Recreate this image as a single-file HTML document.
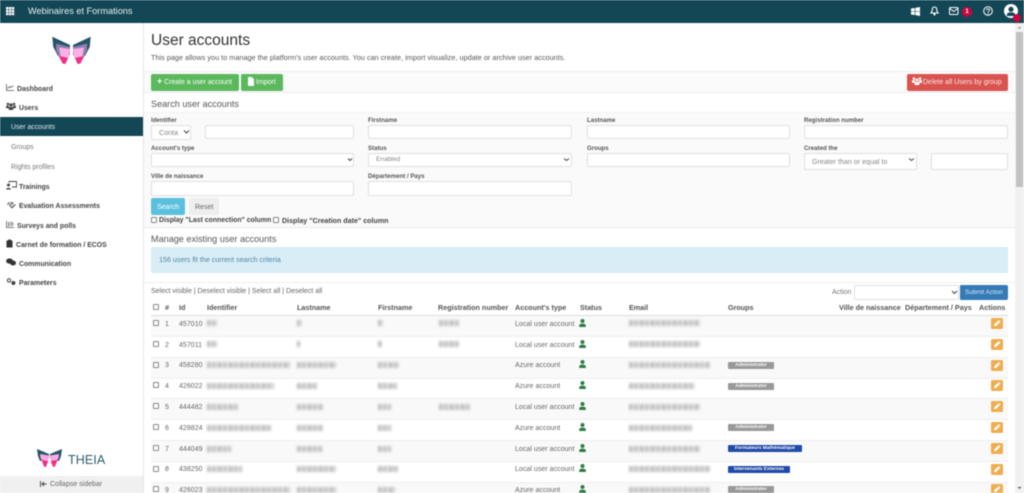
<!DOCTYPE html>
<html><head><meta charset="utf-8"><title>User accounts</title>
<style>
html,body{margin:0;padding:0;width:1024px;height:493px;overflow:hidden;background:#fff}
#r{position:absolute;left:0;top:0;width:1024px;height:493px;overflow:hidden;filter:blur(.4px);font-family:"Liberation Sans",sans-serif;color:#555;font-size:7.2px}
.t{position:absolute;white-space:nowrap;line-height:12px;margin-top:1px}
.a{position:absolute}
.B{font-weight:bold}
.l{font-weight:bold;font-size:6.1px;color:#555}
.t.n{font-weight:bold;font-size:6.9px;color:#444;margin-top:2px}
.h{font-weight:bold;font-size:7.2px;color:#555}
.t.c{font-size:7px;color:#666;letter-spacing:.04px;margin-top:1.7px}
.i{position:absolute;box-sizing:border-box;background:#fff;border:1px solid #e0e0e0;border-radius:2px}
.cb{position:absolute;box-sizing:border-box;width:6px;height:6px;border:1px solid #888;border-radius:1px;background:#fff}
.b{position:absolute;background:#cfcfcf;height:6px;filter:blur(1.2px);background-image:repeating-linear-gradient(90deg,#bdbdbd 0 3px,#dcdcdc 3px 5px,#c8c8c8 5px 9px,#e2e2e2 9px 11px)}
.g{position:absolute;left:728px;width:46px;height:7px;background:#999;border-radius:1px;color:#fff;font-size:4.8px;font-weight:bold;line-height:7px;text-align:center;white-space:nowrap}
.p{position:absolute;left:991px;width:12px;height:11px;background:#f0ad4e;border-radius:1.5px}
svg{position:absolute;overflow:visible}
</style></head><body><div id="r">

<!-- top bar -->
<div class="a" style="left:0;top:0;width:1024px;height:23px;background:#134756"></div>
<svg style="left:6px;top:7px" width="8" height="8"><g fill="#fff"><rect x="0" y="0" width="2.4" height="2.4"/><rect x="2.9" y="0" width="2.4" height="2.4"/><rect x="5.8" y="0" width="2.4" height="2.4"/><rect x="0" y="2.9" width="2.4" height="2.4"/><rect x="2.9" y="2.9" width="2.4" height="2.4"/><rect x="5.8" y="2.9" width="2.4" height="2.4"/><rect x="0" y="5.8" width="2.4" height="2.4"/><rect x="2.9" y="5.8" width="2.4" height="2.4"/><rect x="5.8" y="5.8" width="2.4" height="2.4"/></g></svg>
<div class="t" style="left:28px;top:4px;color:#e8eef0;font-size:9.2px">Webinaires et Formations</div>
<svg style="left:911px;top:7px" width="9" height="9"><path d="M0 1.5L3.8 1V4.2H0zM4.4 .9L9 0V4.2H4.4zM0 4.8H3.8V8L0 7.5zM4.4 4.8H9V9L4.4 8.1z" fill="#fff"/></svg>
<svg style="left:930px;top:6px" width="9" height="10"><path d="M4.5 1C2.8 1 2.2 2.4 2.2 4C2.2 5.6 1.6 6.4 1 7H8C7.4 6.4 6.8 5.6 6.8 4C6.8 2.4 6.2 1 4.5 1Z" fill="none" stroke="#fff" stroke-width="1.1"/><circle cx="4.5" cy="8.4" r="1.1" fill="#fff"/></svg>
<svg style="left:949px;top:7px" width="10" height="8"><rect x=".5" y=".5" width="8.5" height="7" rx="1" fill="none" stroke="#fff"/><path d="M.8 1.5L4.7 4.5L8.7 1.5" fill="none" stroke="#fff"/></svg>
<div class="a" style="left:962px;top:7px;width:10px;height:10px;border-radius:5px;background:#c8063c;color:#fff;font-size:6px;font-weight:bold;line-height:10px;text-align:center">1</div>
<svg style="left:983px;top:6px" width="10" height="10"><circle cx="5" cy="5" r="4.3" fill="none" stroke="#fff" stroke-width="1"/><path d="M3.5 4C3.5 2.4 6.5 2.4 6.5 4C6.5 5 5 5 5 6.2" fill="none" stroke="#fff" stroke-width=".9"/><circle cx="5" cy="7.6" r=".6" fill="#fff"/></svg>
<svg style="left:1004px;top:4px" width="15" height="15"><circle cx="7" cy="7" r="7" fill="#fff"/><circle cx="7" cy="5.3" r="2.6" fill="#134756"/><path d="M2.8 12V11C2.8 9 4.8 8.4 7 8.4C9.2 8.4 11.2 9 11.2 11V12Z" fill="#134756"/></svg>
<div class="a" style="left:1013px;top:14px;width:8px;height:8px;border-radius:4px;background:#c8063c"></div>

<!-- sidebar -->
<div class="a" style="left:143px;top:23px;width:1px;height:470px;background:#e6e6e6"></div>
<svg style="left:50px;top:35px" width="44" height="32">
 <g>
  <polygon points="2.3,1.7 20,10 20,15 8,21 3.3,12" fill="#245468"/>
  <polygon points="6,8.500 20,12 20,20 10,24 6,15" fill="#8f80ac"/>
  <polygon points="9,12.500 20,14 18.500,24 11,24" fill="#fdaee5"/>
  <polygon points="9,21 18,23 15.500,29 12.500,28.500" fill="#ee2f86"/>
 </g>
 <g transform="translate(43,0) scale(-1,1)">
  <polygon points="2.3,1.7 20,10 20,15 8,21 3.3,12" fill="#245468"/>
  <polygon points="6,8.500 20,12 20,20 10,24 6,15" fill="#8f80ac"/>
  <polygon points="9,12.500 20,14 18.500,24 11,24" fill="#fdaee5"/>
  <polygon points="9,21 18,23 15.500,29 12.500,28.500" fill="#ee2f86"/>
 </g>
</svg>

<svg style="left:6px;top:84px" width="8" height="7"><path d="M.5 0V6.5H8M1.5 4.5L3.5 2.5L5 3.5L7.5 1.5" fill="none" stroke="#555" stroke-width=".8"/></svg>
<div class="t n" style="left:17px;top:82px">Dashboard</div>
<svg style="left:6px;top:102px" width="10" height="8"><g fill="#444"><circle cx="2" cy="2" r="1.3"/><circle cx="8" cy="2" r="1.3"/><circle cx="5" cy="3" r="1.6"/><rect x="0" y="3.6" width="3" height="2.6" rx="1"/><rect x="7" y="3.6" width="3" height="2.6" rx="1"/><rect x="2.6" y="5" width="4.8" height="3" rx="1"/></g></svg>
<div class="t n" style="left:19px;top:101px">Users</div>
<div class="a" style="left:0;top:117px;width:143px;height:19px;background:#134756"></div>
<div class="t" style="left:11px;top:121px;color:#e2e8ea;font-size:6.9px">User accounts</div>
<div class="t" style="left:11px;top:141px;color:#777;font-size:6.9px">Groups</div>
<div class="t" style="left:11px;top:161px;color:#777;font-size:6.9px">Rights profiles</div>
<svg style="left:6px;top:181px" width="11" height="9"><circle cx="2.5" cy="4" r="1.5" fill="#444"/><path d="M0 8.5C0 6.3 5 6.3 5 8.5Z" fill="#444"/><path d="M3 1.5V.5H10.5V6H6" fill="none" stroke="#444" stroke-width=".9"/></svg>
<div class="t n" style="left:19px;top:180px">Trainings</div>
<div class="t" style="left:7px;top:197px;font-size:4.6px;font-weight:bold;color:#444">AB</div>
<svg style="left:9px;top:204px" width="7" height="5"><path d="M.5 1L3 3.8L6.5 .5" fill="none" stroke="#444"/></svg>
<div class="t n" style="left:19px;top:199px">Evaluation Assessments</div>
<svg style="left:6px;top:221px" width="8" height="7"><path d="M.5 0V6.5H8" fill="none" stroke="#555" stroke-width=".8"/><path d="M2.2 1H3.2V5.5H2.2zM4 2.5H8V3.2H4zM4 4H7V4.7H4zM4 1H7V1.7H4z" fill="#666"/></svg>
<div class="t n" style="left:17px;top:219px">Surveys and polls</div>
<svg style="left:6px;top:239px" width="7" height="9"><path d="M.5 1.5H2.2V.5H4.8V1.5H6.5V8.5H.5Z" fill="#333"/></svg>
<div class="t n" style="left:16px;top:238px">Carnet de formation / ECOS</div>
<svg style="left:6px;top:258px" width="10" height="8"><ellipse cx="3.5" cy="3" rx="3.4" ry="2.6" fill="#333"/><ellipse cx="7" cy="5" rx="3" ry="2.5" fill="#333"/></svg>
<div class="t n" style="left:19px;top:257px">Communication</div>
<svg style="left:6px;top:278px" width="10" height="8"><circle cx="3" cy="2.4" r="1.7" fill="none" stroke="#444" stroke-width="1"/><circle cx="7.4" cy="5" r="2" fill="#444"/></svg>
<div class="t n" style="left:19px;top:276px">Parameters</div>

<svg style="left:36px;top:448px" width="28" height="20">
 <polygon points="1,1 13,6 13,10 4,13 2,8" fill="#245468"/>
 <polygon points="4,6 13,7.5 12,16 8,15 4.5,10" fill="#fba8e2"/>
 <polygon points="5.5,12 12,13 10,19 8,18.5" fill="#ee2f86"/>
 <g transform="translate(27,0) scale(-1,1)">
 <polygon points="1,1 13,6 13,10 4,13 2,8" fill="#245468"/>
 <polygon points="4,6 13,7.5 12,16 8,15 4.5,10" fill="#fba8e2"/>
 <polygon points="5.5,12 12,13 10,19 8,18.5" fill="#ee2f86"/>
 </g>
</svg>
<div class="t" style="left:68px;top:453px;font-size:12.5px;color:#2d5d70;letter-spacing:.1px">THEIA</div>
<div class="a" style="left:0;top:476px;width:143px;height:17px;background:#f0f0f0"></div>
<svg style="left:40px;top:481px" width="7" height="6"><path d="M.5 0V6M6.5 3H2.2M4 1L2 3L4 5" fill="none" stroke="#444" stroke-width=".9"/></svg>
<div class="t" style="left:50px;top:478px;font-size:7px;color:#666">Collapse sidebar</div>

<!-- heading -->
<div class="t" style="left:151px;top:31px;font-size:15.5px;color:#333;line-height:18px">User accounts</div>
<div class="t" style="left:151px;top:51px;font-size:7.2px;color:#555;letter-spacing:.05px">This page allows you to manage the platform's user accounts. You can create, import visualize, update or archive user accounts.</div>

<!-- toolbar -->
<div class="a" style="left:144px;top:71px;width:871px;height:22px;background:#fbfbfb;border-top:1px solid #eee;border-bottom:1px solid #eee;box-sizing:border-box"></div>
<div class="a" style="left:151px;top:74px;width:88px;height:17px;background:#5cb85c;border-radius:2px"></div>
<div class="t" style="left:157px;top:76px;color:#fff;font-size:6.9px"><b style="font-size:9px;line-height:8px">+</b> Create a user account</div>
<div class="a" style="left:241px;top:74px;width:42px;height:17px;background:#5cb85c;border-radius:2px"></div>
<svg style="left:247px;top:77px" width="7" height="9"><path d="M1 0H4.8L7 2.2V9H1Z" fill="#fff"/></svg>
<div class="t" style="left:256px;top:76px;color:#fff;font-size:7px">Import</div>
<div class="a" style="left:907px;top:74px;width:101px;height:17px;background:#d9534f;border-radius:2px"></div>
<svg style="left:912px;top:77px" width="10" height="8"><g fill="#fff"><circle cx="2" cy="1.5" r="1.3"/><circle cx="8" cy="1.5" r="1.3"/><circle cx="5" cy="3" r="1.5"/><rect x="0" y="3.2" width="3" height="2.6"/><rect x="7" y="3.2" width="3" height="2.6"/><rect x="2.6" y="5" width="4.8" height="3"/></g></svg>
<div class="t" style="left:923px;top:76px;color:#fbe6e5;font-size:7px">Delete all Users by group</div>

<!-- search -->
<div class="t" style="left:151px;top:97px;font-size:9.1px;color:#555">Search user accounts</div>
<div class="a" style="left:144px;top:112px;width:871px;height:116px;background:#fafafa;border-bottom:1px solid #eaeaea;border-top:1px solid #f3f3f3;box-sizing:border-box"></div>

<div class="t l" style="left:151px;top:114px">Identifier</div>
<div class="t l" style="left:368px;top:114px">Firstname</div>
<div class="t l" style="left:587px;top:114px">Lastname</div>
<div class="t l" style="left:804px;top:114px">Registration number</div>
<div class="i" style="left:151px;top:125px;width:40px;height:15px"></div>
<div class="t" style="left:159px;top:126px;color:#888">Conta</div>
<div class="i" style="left:205px;top:125px;width:149px;height:14px"></div>
<div class="i" style="left:368px;top:125px;width:204px;height:14px"></div>
<div class="i" style="left:587px;top:125px;width:203px;height:14px"></div>
<div class="i" style="left:804px;top:125px;width:204px;height:14px"></div>

<div class="t l" style="left:151px;top:142px">Account's type</div>
<div class="t l" style="left:368px;top:142px">Status</div>
<div class="t l" style="left:587px;top:142px">Groups</div>
<div class="t l" style="left:804px;top:142px">Created the</div>
<div class="i" style="left:151px;top:153px;width:203px;height:14px"></div>
<div class="i" style="left:368px;top:153px;width:204px;height:14px"></div>
<div class="t" style="left:376px;top:153px;color:#888;font-size:6.6px">Enabled</div>
<div class="i" style="left:587px;top:153px;width:203px;height:14px"></div>
<div class="i" style="left:804px;top:153px;width:113px;height:17px"></div>
<div class="t" style="left:812px;top:155px;color:#888;font-size:7.1px">Greater than or equal to</div>
<div class="i" style="left:931px;top:153px;width:77px;height:17px"></div>

<div class="t l" style="left:151px;top:170px">Ville de naissance</div>
<div class="t l" style="left:368px;top:170px">Département / Pays</div>
<div class="i" style="left:151px;top:181px;width:203px;height:15px"></div>
<div class="i" style="left:368px;top:181px;width:204px;height:15px"></div>

<svg style="left:0;top:0" width="1024" height="493"><g fill="none" stroke="#444" stroke-width="1"><path d="M184 130.5L186.5 133L189 130.5"/><path d="M348 158.5L350 160.5L352 158.5"/><path d="M564 158.5L566.5 160.5L569 158.5"/><path d="M909 158.5L911.5 160.5L914 158.5"/></g></svg>

<div class="a" style="left:151px;top:198px;width:34px;height:17px;background:#5bc0de;border-radius:2px"></div>
<div class="t" style="left:157px;top:201px;color:#fff;font-size:7px">Search</div>
<div class="a" style="left:189px;top:198px;width:30px;height:17px;background:#eee;border-radius:2px"></div>
<div class="t" style="left:195px;top:201px;color:#666;font-size:7px">Reset</div>
<div class="cb" style="left:151px;top:217px"></div>
<div class="t B" style="left:159px;top:214px;font-size:6.9px;color:#444">Display "Last connection" column</div>
<div class="cb" style="left:273px;top:217px"></div>
<div class="t B" style="left:282px;top:214px;font-size:7.1px;color:#444">Display "Creation date" column</div>

<!-- manage -->
<div class="t" style="left:151px;top:232px;font-size:9.1px;color:#555">Manage existing user accounts</div>
<div class="a" style="left:151px;top:247px;width:857px;height:26px;background:#d9edf7;border-radius:2px"></div>
<div class="t" style="left:159px;top:253px;color:#4f87a5;font-size:7.15px">156 users fit the current search criteria</div>
<div class="a" style="left:144px;top:282px;width:871px;height:1px;background:#eee"></div>
<div class="t" style="left:151px;top:285px;color:#666;font-size:7px">Select visible | Deselect visible | Select all | Deselect all</div>
<div class="t" style="left:832px;top:286px;color:#777;font-size:7px">Action</div>
<div class="i" style="left:854px;top:285px;width:105px;height:15px"></div>
<div class="a" style="left:960px;top:285px;width:48px;height:15px;background:#337ab7;border-radius:1px 2px 2px 1px"></div>
<svg style="left:0;top:0" width="1024" height="493"><path d="M952 291L954.5 293.5L957 291" fill="none" stroke="#444"/></svg>
<div class="t" style="left:965px;top:286px;color:#dbe8f3;font-size:6.2px">Submit Action</div>

<!-- table head -->
<div class="cb" style="left:153px;top:304px"></div>
<div class="t h" style="left:165px;top:301px">#</div>
<div class="t h" style="left:179px;top:301px">Id</div>
<div class="t h" style="left:207px;top:301px">Identifier</div>
<div class="t h" style="left:297px;top:301px">Lastname</div>
<div class="t h" style="left:378px;top:301px">Firstname</div>
<div class="t h" style="left:438px;top:301px">Registration number</div>
<div class="t h" style="left:515px;top:301px">Account's type</div>
<div class="t h" style="left:580px;top:301px">Status</div>
<div class="t h" style="left:629px;top:301px">Email</div>
<div class="t h" style="left:728px;top:301px">Groups</div>
<div class="t h" style="left:839px;top:301px">Ville de naissance</div>
<div class="t h" style="left:905px;top:301px">Département / Pays</div>
<div class="t h" style="left:979px;top:301px">Actions</div>
<div class="a" style="left:151px;top:315px;width:857px;height:1px;background:#ddd"></div>

<!-- stripes -->
<div class="a" style="left:151px;top:316px;width:857px;height:20px;background:#f9f9f9"></div>
<div class="a" style="left:151px;top:336px;width:857px;height:1px;background:#eee"></div>
<div class="a" style="left:151px;top:357px;width:857px;height:21px;background:#f9f9f9;border-top:1px solid #eee;box-sizing:border-box"></div>
<div class="a" style="left:151px;top:378px;width:857px;height:1px;background:#eee"></div>
<div class="a" style="left:151px;top:398px;width:857px;height:21px;background:#f9f9f9;border-top:1px solid #eee;box-sizing:border-box"></div>
<div class="a" style="left:151px;top:419px;width:857px;height:1px;background:#eee"></div>
<div class="a" style="left:151px;top:440px;width:857px;height:21px;background:#f9f9f9;border-top:1px solid #eee;box-sizing:border-box"></div>
<div class="a" style="left:151px;top:461px;width:857px;height:1px;background:#eee"></div>
<div class="a" style="left:151px;top:482px;width:857px;height:11px;background:#f9f9f9;border-top:1px solid #eee;box-sizing:border-box"></div>

<!-- row 1 -->
<div class="cb" style="left:153px;top:320px"></div><div class="t c" style="left:165px;top:317px">1</div><div class="t c" style="left:179px;top:317px">457010</div><div class="b" style="left:207px;top:320px;width:10px"></div><div class="b" style="left:297px;top:320px;width:5px"></div><div class="b" style="left:378px;top:320px;width:5px"></div><div class="b" style="left:439px;top:320px;width:20px"></div><div class="t c" style="left:515px;top:317px">Local user account</div><div class="b" style="left:629px;top:320px;width:71px"></div>
<!-- row 2 -->
<div class="cb" style="left:153px;top:341px"></div><div class="t c" style="left:165px;top:338px">2</div><div class="t c" style="left:179px;top:338px">457011</div><div class="b" style="left:207px;top:341px;width:10px"></div><div class="b" style="left:297px;top:341px;width:3px"></div><div class="b" style="left:378px;top:341px;width:4px"></div><div class="b" style="left:439px;top:341px;width:20px"></div><div class="t c" style="left:515px;top:338px">Local user account</div><div class="b" style="left:629px;top:341px;width:71px"></div>
<!-- row 3 -->
<div class="cb" style="left:153px;top:362px"></div><div class="t c" style="left:165px;top:358px">3</div><div class="t c" style="left:179px;top:358px">458280</div><div class="b" style="left:207px;top:362px;width:83px"></div><div class="b" style="left:297px;top:362px;width:39px"></div><div class="b" style="left:378px;top:362px;width:21px"></div><div class="t c" style="left:515px;top:358px">Azure account</div><div class="b" style="left:629px;top:362px;width:81px"></div><div class="g" style="top:362px">Administrator</div>
<!-- row 4 -->
<div class="cb" style="left:153px;top:382px"></div><div class="t c" style="left:165px;top:379px">4</div><div class="t c" style="left:179px;top:379px">426022</div><div class="b" style="left:207px;top:383px;width:67px"></div><div class="b" style="left:297px;top:383px;width:20px"></div><div class="b" style="left:378px;top:383px;width:19px"></div><div class="t c" style="left:515px;top:379px">Azure account</div><div class="b" style="left:629px;top:383px;width:66px"></div><div class="g" style="top:383px">Administrator</div>
<!-- row 5 -->
<div class="cb" style="left:153px;top:403px"></div><div class="t c" style="left:165px;top:400px">5</div><div class="t c" style="left:179px;top:400px">444482</div><div class="b" style="left:207px;top:404px;width:31px"></div><div class="b" style="left:297px;top:404px;width:26px"></div><div class="b" style="left:378px;top:404px;width:13px"></div><div class="b" style="left:439px;top:404px;width:31px"></div><div class="t c" style="left:515px;top:400px">Local user account</div><div class="b" style="left:629px;top:404px;width:71px"></div>
<!-- row 6 -->
<div class="cb" style="left:153px;top:424px"></div><div class="t c" style="left:165px;top:421px">6</div><div class="t c" style="left:179px;top:421px">428824</div><div class="b" style="left:207px;top:425px;width:64px"></div><div class="b" style="left:297px;top:425px;width:26px"></div><div class="b" style="left:378px;top:425px;width:13px"></div><div class="t c" style="left:515px;top:421px">Azure account</div><div class="b" style="left:629px;top:425px;width:63px"></div><div class="g" style="top:424px">Administrator</div>
<!-- row 7 -->
<div class="cb" style="left:153px;top:445px"></div><div class="t c" style="left:165px;top:442px">7</div><div class="t c" style="left:179px;top:442px">444049</div><div class="b" style="left:207px;top:446px;width:24px"></div><div class="b" style="left:297px;top:446px;width:25px"></div><div class="b" style="left:378px;top:446px;width:13px"></div><div class="t c" style="left:515px;top:442px">Local user account</div><div class="b" style="left:629px;top:446px;width:71px"></div><div class="g" style="top:445px;width:74px;background:#1f4aa8">Formateurs Mathématique</div>
<!-- row 8 -->
<div class="cb" style="left:153px;top:466px"></div><div class="t c" style="left:165px;top:462px">8</div><div class="t c" style="left:179px;top:462px">438250</div><div class="b" style="left:207px;top:466px;width:35px"></div><div class="b" style="left:297px;top:466px;width:39px"></div><div class="b" style="left:378px;top:466px;width:20px"></div><div class="t c" style="left:515px;top:462px">Local user account</div><div class="b" style="left:629px;top:466px;width:81px"></div><div class="g" style="top:466px;width:62px;background:#1f4aa8">Intervenants Externes</div>
<!-- row 9 -->
<div class="cb" style="left:153px;top:486px"></div><div class="t c" style="left:165px;top:483px">9</div><div class="t c" style="left:179px;top:483px">426023</div><div class="b" style="left:207px;top:487px;width:83px"></div><div class="b" style="left:297px;top:487px;width:39px"></div><div class="b" style="left:378px;top:487px;width:17px"></div><div class="t c" style="left:515px;top:483px">Azure account</div><div class="b" style="left:629px;top:487px;width:81px"></div><div class="g" style="top:486px">Administrator</div>

<!-- status icons -->
<svg style="left:0;top:0" width="1024" height="493"><defs><g id="u"><circle cx="582.5" cy="0" r="2" fill="#2e7d46"/><path d="M579.2 6V4.5C579.2 3 581 2.6 582.5 2.6C584 2.6 585.8 3 585.8 4.5V6Z" fill="#2e7d46"/></g><path id="q" d="M994 8L994.5 6L999 2L1000.5 3.5L996 8Z" fill="#fff"/></defs>
<use href="#u" y="321"/><use href="#u" y="342"/><use href="#u" y="362"/><use href="#u" y="383"/><use href="#u" y="404"/><use href="#u" y="425"/><use href="#u" y="446"/><use href="#u" y="466"/><use href="#u" y="487"/></svg>

<!-- pencil buttons -->
<div class="p" style="top:318px"></div><div class="p" style="top:339px"></div><div class="p" style="top:360px"></div><div class="p" style="top:380px"></div><div class="p" style="top:401px"></div><div class="p" style="top:422px"></div><div class="p" style="top:443px"></div><div class="p" style="top:464px"></div><div class="p" style="top:484px"></div>
<svg style="left:0;top:0" width="1024" height="493">
<use href="#q" y="318"/><use href="#q" y="339"/><use href="#q" y="360"/><use href="#q" y="380"/><use href="#q" y="401"/><use href="#q" y="422"/><use href="#q" y="443"/><use href="#q" y="464"/><use href="#q" y="484"/></svg>

<!-- scrollbar -->
<div class="a" style="left:1015px;top:23px;width:9px;height:470px;background:#f1f1f1"></div>
<div class="a" style="left:1016px;top:32px;width:7px;height:155px;background:#c1c1c1"></div>
<svg style="left:1015px;top:23px" width="9" height="470"><path d="M4.5 3.5L6.5 5.5H2.5Z" fill="#999"/><path d="M2.5 464H6.5L4.5 466Z" fill="#555"/></svg>

</div></body></html>
